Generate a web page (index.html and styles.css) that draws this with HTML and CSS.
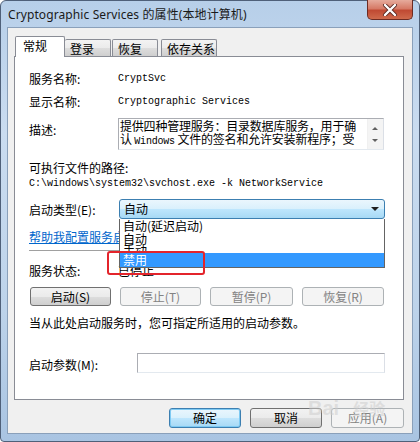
FILE: index.html
```html
<!DOCTYPE html>
<html lang="zh-CN">
<head>
    <meta charset="UTF-8">
    <title>Cryptographic Services 的属性(本地计算机)</title>
    <link rel="stylesheet" href="styles.css">
</head>
<body>
    <div class="window">
        <div class="titlebar">
            <span class="title">Cryptographic Services 的属性(本地计算机)</span>
            <span class="close">
                <svg width="16" height="12" viewBox="0 0 16 12">
                    <path d="M3 1 L13 11 M13 1 L3 11" stroke="#5a2a24" stroke-width="4" stroke-linecap="round"/>
                    <path d="M3 1 L13 11 M13 1 L3 11" stroke="#ffffff" stroke-width="2.4" stroke-linecap="round"/>
                </svg>
            </span>
        </div>

        <div class="client">
            <div class="tabs">
                <div class="tab active">常规</div>
                <div class="tab t2">登录</div>
                <div class="tab t3">恢复</div>
                <div class="tab t4">依存关系</div>
            </div>

            <div class="panel">
                <div class="row">
                    <span class="label">服务名称:</span>
                    <span class="mono">CryptSvc</span>
                </div>
                <div class="row">
                    <span class="label">显示名称:</span>
                    <span class="mono">Cryptographic Services</span>
                </div>
                <div class="row desc-row">
                    <span class="label desc-label">描述:</span>
                    <div class="textbox">
                        <div class="textbox-text">
                            提供四种管理服务：目录数据库服务，用于确<br>
                            认 <span class="mono-inline">Windows</span> 文件的签名和允许安装新程序；受
                        </div>
                        <div class="scrollbar">
                            <span class="arrow-up"></span>
                            <span class="arrow-down"></span>
                        </div>
                    </div>
                </div>
                <div class="line exe-label">可执行文件的路径:</div>
                <div class="line mono">C:\windows\system32\svchost.exe -k NetworkService</div>

                <div class="row startup-row">
                    <span class="label">启动类型(E):</span>
                    <div class="combo-wrap">
                        <div class="combo">
                            <span>自动</span>
                            <span class="combo-arrow"></span>
                        </div>
                        <div class="dropdown">
                            <div class="opt o1">自动(延迟启动)</div>
                            <div class="opt o2">自动</div>
                            <div class="opt o3">手动</div>
                            <div class="opt o4 selected">禁用</div>
                        </div>
                        <div class="highlight-box"></div>
                    </div>
                </div>

                <div class="line help-link">帮助我配置服务启动选项。</div>
                <div class="separator"></div>

                <div class="row status-row">
                    <span class="label">服务状态:</span>
                    <span>已停止</span>
                </div>

                <div class="service-buttons">
                    <button class="btn">启动(S)</button>
                    <button class="btn disabled">停止(T)</button>
                    <button class="btn disabled">暂停(P)</button>
                    <button class="btn disabled">恢复(R)</button>
                </div>

                <div class="line hint">当从此处启动服务时，您可指定所适用的启动参数。</div>

                <div class="row param-row">
                    <span class="label param-label">启动参数(M):</span>
                    <div class="param-input"></div>
                </div>
            </div>

            <div class="footer">
                <button class="btn default">确定</button>
                <button class="btn">取消</button>
                <button class="btn disabled">应用(A)</button>
            </div>

            <div class="watermark"><span class="wm-bai">Bai</span><span class="wm-jy">经验</span></div>
        </div>
    </div>
</body>
</html>
```

FILE: styles.css
```css
* {
    box-sizing: border-box;
}

body {
    margin: 0;
    font-family: "Noto Sans CJK SC", "Noto Sans", sans-serif;
    font-size: 12px;
    color: #000;
    background: #fff;
}

.window {
    position: relative;
    width: 420px;
    height: 442px;
    padding: 0 6px 7px;
    border: 1px solid #4f6079;
    border-radius: 6px 6px 4px 4px;
    background: linear-gradient(180deg, #b7cfe9 0%, #cadcf0 30%, #bdd3ea 70%, #a9c4e2 100%);
    display: flex;
    flex-direction: column;
}

.titlebar {
    height: 26px;
    display: flex;
    align-items: flex-start;
}

.title {
    margin-top: 6px;
    padding-left: 1px;
    line-height: 16px;
    font-family: "Noto Sans", "Noto Sans CJK SC", sans-serif;
    font-size: 12px;
    color: #1a1a1a;
    letter-spacing: 0.1px;
}

.close {
    margin-left: auto;
    margin-top: -1px;
    margin-right: 0;
    width: 46px;
    height: 20px;
    border: 1px solid #6d2b22;
    border-top: none;
    border-radius: 0 0 5px 5px;
    background: linear-gradient(180deg, #e6ab9c 0%, #d67a66 45%, #c04a33 55%, #cf6a4c 100%);
    display: flex;
    align-items: center;
    justify-content: center;
}

.client {
    position: relative;
    flex: 1;
    border: 1px solid #8aa0ba;
    background: #f0f0f0;
    padding: 8px 8px 0 6px;
    display: flex;
    flex-direction: column;
}

.tabs {
    height: 20px;
    display: flex;
    align-items: flex-end;
    padding-left: 1px;
}

.tab {
    height: 17px;
    line-height: 17px;
    padding-left: 5px;
    border: 1px solid #898c95;
    border-bottom: none;
    border-left: none;
    border-radius: 2px 2px 0 0;
    background: linear-gradient(180deg, #f3f3f3 0%, #ebebeb 50%, #dddddd 51%, #cfcfcf 100%);
}

.tab.active {
    position: relative;
    z-index: 2;
    width: 50px;
    height: 21px;
    margin-bottom: -1px;
    margin-left: 0;
    padding-left: 7px;
    padding-top: 1px;
    line-height: 16px;
    border-left: 1px solid #898c95;
    background: #fff;
}

.tab.t2 {
    width: 46px;
}

.tab.t3 {
    width: 46px;
    margin-left: 1px;
    border-left: 1px solid #898c95;
}

.tab.t4 {
    width: 56px;
    margin-left: 3px;
    border-left: 1px solid #898c95;
}

.panel {
    position: relative;
    height: 344px;
    border: 1px solid #898c95;
    background: #fff;
    padding: 10px 18px 0 14px;
}

.row {
    display: flex;
    align-items: center;
    height: 23px;
}

.label {
    width: 89px;
    flex-shrink: 0;
}

.mono {
    font-family: "Liberation Mono", "Noto Sans CJK SC", monospace;
    font-size: 10px;
}

.mono-inline {
    font-family: "Liberation Mono", monospace;
    font-size: 10px;
}

.line {
    height: 16px;
    line-height: 16px;
}

.desc-row {
    height: 32px;
    margin-top: 5px;
    align-items: flex-start;
}

.desc-label {
    padding-top: 4px;
    line-height: 16px;
}

.textbox {
    width: 266px;
    height: 32px;
    border: 1px solid #abadb3;
    border-right-color: #dbdfe6;
    border-bottom-color: #e3e9ef;
    display: flex;
}

.textbox-text {
    flex: 1;
    overflow: hidden;
    padding: 0 0 0 1px;
    line-height: 13px;
    white-space: nowrap;
    letter-spacing: -0.2px;
}

.scrollbar {
    width: 16px;
    background: #f4f4f4;
    border-left: 1px solid #f0f0f0;
    position: relative;
}

.arrow-up,
.arrow-down {
    position: absolute;
    left: 4px;
    width: 0;
    height: 0;
    border-left: 3px solid transparent;
    border-right: 3px solid transparent;
}

.arrow-up {
    top: 8px;
    border-bottom: 3px solid #606060;
}

.arrow-down {
    top: 20px;
    border-top: 3px solid #606060;
}

.exe-label {
    margin-top: 10px;
}

.startup-row {
    height: 20px;
    margin-top: 7px;
}

.combo-wrap {
    position: relative;
    width: 266px;
    height: 20px;
    margin-left: 1px;
}

.combo {
    height: 20px;
    border: 1px solid #3c7fb1;
    border-radius: 3px;
    background: linear-gradient(180deg, #eaf6fd 0%, #d9f0fc 50%, #bee6fd 51%, #a7d9f5 100%);
    display: flex;
    align-items: center;
    padding-left: 4px;
    line-height: 16px;
}

.combo-arrow {
    margin-left: auto;
    margin-right: 5px;
    width: 0;
    height: 0;
    border-left: 4px solid transparent;
    border-right: 4px solid transparent;
    border-top: 4px solid #1e1e1e;
}

.dropdown {
    position: absolute;
    z-index: 5;
    top: 20px;
    left: 0;
    width: 266px;
    height: 49px;
    background: #fff;
    border: 1px solid #646464;
    border-top: none;
    overflow: hidden;
}

.opt {
    padding-left: 3px;
    line-height: 13px;
    overflow: visible;
}

.opt.o1 {
    height: 13px;
}

.opt.o2 {
    height: 11px;
}

.opt.o3 {
    height: 10px;
}

.opt.o4 {
    height: 14px;
}

.opt.selected {
    position: relative;
    background: #3399ff;
    color: #fff;
}

.highlight-box {
    position: absolute;
    z-index: 6;
    left: -12px;
    top: 52px;
    width: 98px;
    height: 24px;
    border: 2px solid #e3242b;
    border-radius: 3px;
}

.help-link {
    margin-top: 10px;
    color: #0066cc;
    text-decoration: underline;
}

.separator {
    margin-top: 5px;
    height: 1px;
    background: #a0a0a0;
}

.status-row {
    height: 16px;
    margin-top: 11px;
}

.service-buttons {
    margin-top: 9px;
    padding-left: 1px;
    display: grid;
    grid-template-columns: 81px 81px 83px 82px;
    column-gap: 9px;
}

.btn {
    height: 19px;
    padding: 0;
    font-family: "Noto Sans CJK SC", sans-serif;
    font-size: 12px;
    line-height: 16px;
    color: #000;
    border: 1px solid #707070;
    border-radius: 3px;
    background: linear-gradient(180deg, #f2f2f2 0%, #ebebeb 50%, #dddddd 51%, #cfcfcf 100%);
}

.btn.disabled {
    color: #838383;
    border-color: #adb2b5;
    background: #f4f4f4;
}

.btn.default {
    border-color: #3c7fb1;
    background: linear-gradient(180deg, #eaf6fd 0%, #d9f0fc 50%, #bee6fd 51%, #a7d9f5 100%);
    box-shadow: inset 0 0 0 1px #7ecaf3;
}

.hint {
    margin-top: 9px;
}

.param-row {
    height: 20px;
    margin-top: 22px;
}

.param-label {
    width: 108px;
    padding-top: 2px;
}

.param-input {
    width: 248px;
    height: 20px;
    border: 1px solid #abadb3;
    border-right-color: #dbdfe6;
    border-bottom-color: #e3e9ef;
}

.footer {
    margin-top: 8px;
    padding-right: 0;
    display: flex;
    justify-content: flex-end;
    gap: 9px;
}

.footer .btn {
    width: 72px;
    height: 20px;
}

.footer .btn.disabled {
    width: 73px;
}

.watermark {
    position: absolute;
    z-index: 3;
    left: 300px;
    top: 368px;
    pointer-events: none;
    color: rgba(205, 205, 205, 0.55);
    font-family: "Liberation Sans", sans-serif;
    font-weight: bold;
    white-space: nowrap;
}

.wm-bai {
    font-size: 20px;
}

.wm-jy {
    font-family: "Noto Sans CJK SC", sans-serif;
    font-size: 16px;
    margin-left: 14px;
}
```
